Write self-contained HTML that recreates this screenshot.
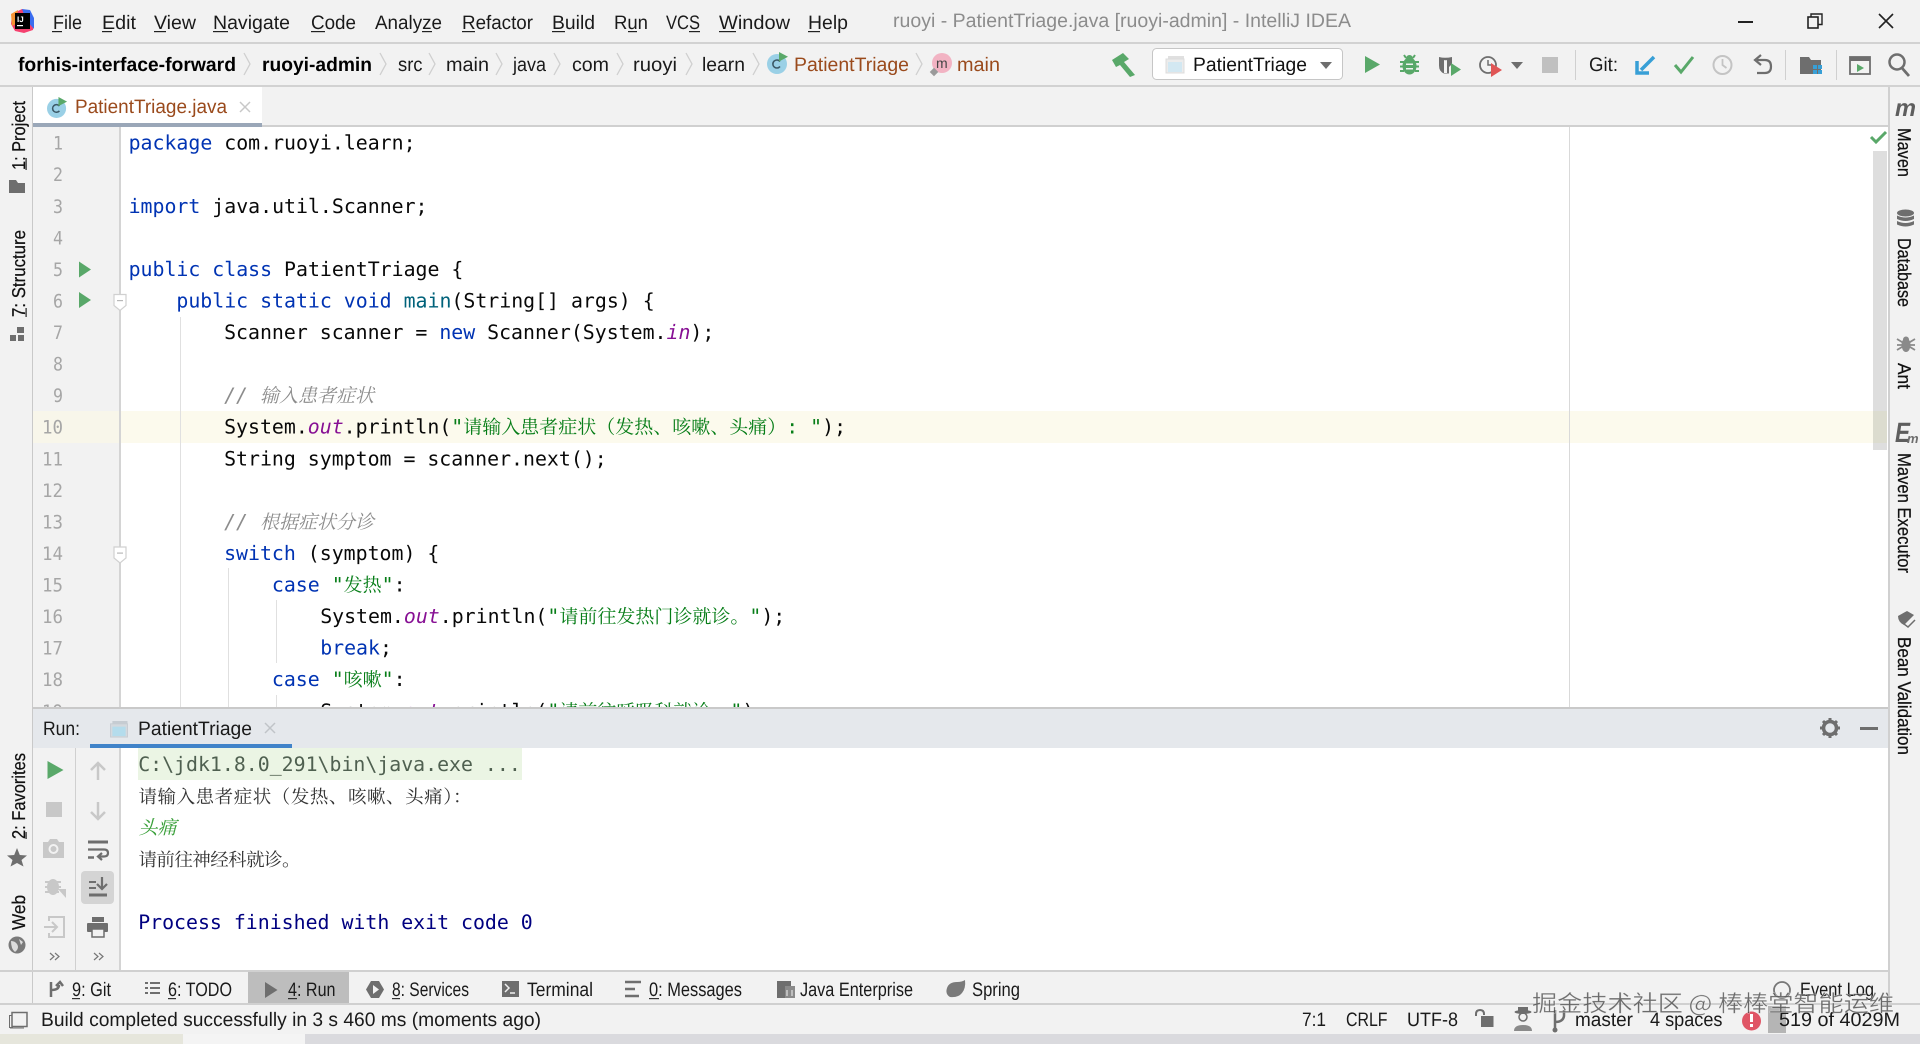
<!DOCTYPE html>
<html><head><meta charset="utf-8"><title>ruoyi - PatientTriage.java</title>
<style>
html,body{margin:0;padding:0;background:#f2f2f2;width:1920px;height:1044px;overflow:hidden}
svg{display:block;text-rendering:geometricPrecision}
.u{font-family:"Liberation Sans","Noto Sans CJK SC",sans-serif;font-size:19.5px;fill:#1a1a1a}
.b{font-weight:bold;fill:#000}
.v{font-family:"Liberation Sans",sans-serif;font-size:18.5px;fill:#111;stroke:#111;stroke-width:.25px}
.c{font-family:"DejaVu Sans Mono","Liberation Mono",monospace;font-size:19.88px;fill:#080808}
.k{fill:#0033b3}
.m{fill:#00627a}
.p{fill:#871094;font-style:italic}
.s{fill:#067d17}
.h{font-family:"Noto Serif CJK SC","Noto Sans CJK SC",serif;font-size:19px;font-weight:400}
.g{fill:#8c8c8c;font-style:italic}
.n{font-family:"DejaVu Sans Mono",monospace;font-size:18.5px;fill:#a6a6a6}
.w{font-family:"Noto Serif CJK SC",serif;font-size:18.5px;fill:#333;font-weight:400}
</style></head><body>
<svg width="1920" height="1044" viewBox="0 0 1920 1044" xmlns="http://www.w3.org/2000/svg">
<defs>
<clipPath id="ed"><rect x="33" y="127" width="1855" height="580"/></clipPath>
<symbol id="cls" viewBox="0 0 22 22"><circle cx="10" cy="12" r="10" fill="#9ad0e6"/><path d="M13 9.5a4 4 0 1 0 0 5" fill="none" stroke="#3c5866" stroke-width="1.6"/><polygon points="12,0 21,4.8 12,9.5" fill="#59a869"/></symbol>
<symbol id="win" viewBox="0 0 20 18"><rect x="3" y="0" width="16" height="4" fill="#e0e0e0"/><rect x="1" y="3" width="18" height="14" fill="#ececec" stroke="#dcdcdc"/><rect x="3" y="6" width="14" height="10" fill="#d3e8f2"/></symbol>
<symbol id="win2" viewBox="0 0 20 18"><rect x="3" y="0" width="16" height="4" fill="#c6ccd2"/><rect x="1" y="3" width="18" height="14" fill="#d4d9de" stroke="#c6ccd2"/><rect x="3" y="6" width="14" height="10" fill="#b4dcec"/></symbol>
</defs>

<!-- base chrome -->
<rect width="1920" height="1044" fill="#f2f2f2"/>
<rect y="42" width="1920" height="2" fill="#d2d2d2"/>
<rect y="85" width="1920" height="2" fill="#d2d2d2"/>

<!-- logo -->
<polygon points="12,14 22,9 30,12 34,20 33,30 24,33 15,31 11,24" fill="#f5416f"/>
<polygon points="22,9 30,10 34,18 34,29 26,20" fill="#3b6df0"/>
<polygon points="11,14 18,10 16,24 12,26" fill="#f79333"/>
<rect x="15" y="13" width="15" height="16" fill="#000"/>
<text x="17" y="22" font-family="Liberation Sans" font-size="8" font-weight="bold" fill="#fff">IJ</text>
<rect x="17" y="25" width="6" height="1.2" fill="#fff"/>

<!-- menu -->
<g class="u">
<text x="53" y="29" textLength="29" lengthAdjust="spacingAndGlyphs" class="u">File</text>
<text x="102" y="29" textLength="34" lengthAdjust="spacingAndGlyphs" class="u">Edit</text>
<text x="154" y="29" textLength="42" lengthAdjust="spacingAndGlyphs" class="u">View</text>
<text x="213" y="29" textLength="77" lengthAdjust="spacingAndGlyphs" class="u">Navigate</text>
<text x="311" y="29" textLength="45" lengthAdjust="spacingAndGlyphs" class="u">Code</text>
<text x="375" y="29" textLength="67" lengthAdjust="spacingAndGlyphs" class="u">Analyze</text>
<text x="462" y="29" textLength="71" lengthAdjust="spacingAndGlyphs" class="u">Refactor</text>
<text x="552" y="29" textLength="43" lengthAdjust="spacingAndGlyphs" class="u">Build</text>
<text x="614" y="29" textLength="34" lengthAdjust="spacingAndGlyphs" class="u">Run</text>
<text x="666" y="29" textLength="34" lengthAdjust="spacingAndGlyphs" class="u">VCS</text>
<text x="719" y="29" textLength="71" lengthAdjust="spacingAndGlyphs" class="u">Window</text>
<text x="808" y="29" textLength="40" lengthAdjust="spacingAndGlyphs" class="u">Help</text>
</g>
<g fill="#222">
<rect x="52" y="31" width="10" height="1.2"/><rect x="102" y="31" width="10" height="1.2"/><rect x="154" y="31" width="12" height="1.2"/><rect x="213" y="31" width="15" height="1.2"/><rect x="311" y="31" width="14" height="1.2"/><rect x="422" y="31" width="10" height="1.2"/><rect x="462" y="31" width="13" height="1.2"/><rect x="552" y="31" width="13" height="1.2"/><rect x="628" y="31" width="9" height="1.2"/><rect x="689" y="31" width="11" height="1.2"/><rect x="719" y="31" width="17" height="1.2"/><rect x="808" y="31" width="12" height="1.2"/>
</g>
<text x="893" y="27" textLength="458" lengthAdjust="spacingAndGlyphs" class="u" style="fill:#8c8c8c">ruoyi - PatientTriage.java [ruoyi-admin] - IntelliJ IDEA</text>

<!-- window controls -->
<rect x="1738" y="21" width="15" height="2" fill="#222"/>
<rect x="1808" y="17" width="10" height="11" fill="none" stroke="#222" stroke-width="1.6"/>
<path d="M1811 17v-3h11v10.500h-4" fill="none" stroke="#222" stroke-width="1.4"/>
<path d="M1879 14l14 14M1893 14l-14 14" stroke="#222" stroke-width="1.6"/>

<!-- breadcrumb -->
<text x="18" y="71" textLength="218" lengthAdjust="spacingAndGlyphs" class="u b">forhis-interface-forward</text>
<text x="262" y="71" textLength="110" lengthAdjust="spacingAndGlyphs" class="u b">ruoyi-admin</text>
<text x="398" y="71" textLength="24.500" lengthAdjust="spacingAndGlyphs" class="u">src</text>
<text x="446" y="71" textLength="43" lengthAdjust="spacingAndGlyphs" class="u">main</text>
<text x="513" y="71" textLength="33" lengthAdjust="spacingAndGlyphs" class="u">java</text>
<text x="572" y="71" textLength="37" lengthAdjust="spacingAndGlyphs" class="u">com</text>
<text x="633" y="71" textLength="44" lengthAdjust="spacingAndGlyphs" class="u">ruoyi</text>
<text x="702" y="71" textLength="43" lengthAdjust="spacingAndGlyphs" class="u">learn</text>
<text x="794" y="71" textLength="115" lengthAdjust="spacingAndGlyphs" class="u" style="fill:#9a4a1c">PatientTriage</text>
<text x="957" y="71" textLength="43" lengthAdjust="spacingAndGlyphs" class="u" style="fill:#9a4a1c">main</text>
<g fill="none" stroke="#cfcfcf" stroke-width="1.3">
<path d="M244 53l6 11-6 11"/><path d="M380 53l6 11-6 11"/><path d="M429 53l6 11-6 11"/><path d="M496 53l6 11-6 11"/><path d="M554 53l6 11-6 11"/><path d="M617 53l6 11-6 11"/><path d="M686 53l6 11-6 11"/><path d="M753 53l6 11-6 11"/><path d="M916 53l6 11-6 11"/>
</g>
<use href="#cls" x="767" y="52" width="22" height="22"/>
<circle cx="942" cy="63" r="10" fill="#f2b3c3"/>
<text x="936" y="68" font-family="Liberation Sans" font-size="14" fill="#444">m</text>
<rect x="931" y="69" width="6" height="6" transform="rotate(45 934 72)" fill="#9a9a9a"/>

<!-- toolbar -->
<path d="M1112 60l11-7 6 6-5 3 11 13-5 2-10-12-4 2z" fill="#59a869"/>
<rect x="1152.500" y="48.500" width="190" height="31" rx="4" fill="#fff" stroke="#c6c6c6"/>
<use href="#win" x="1165" y="56" width="20" height="18"/>
<text x="1193" y="71" textLength="114" lengthAdjust="spacingAndGlyphs" class="u" style="fill:#111">PatientTriage</text>
<polygon points="1320,62 1332,62 1326,69" fill="#6e6e6e"/>
<polygon points="1365,56 1380,64.500 1365,73" fill="#59a869"/>
<!-- debug -->
<g fill="#59a869"><ellipse cx="1409.500" cy="66" rx="7" ry="8.500"/><circle cx="1409.500" cy="58.500" r="3.500"/><rect x="1400" y="61" width="4" height="2"/><rect x="1415" y="61" width="4" height="2"/><rect x="1400" y="65.500" width="4" height="2"/><rect x="1415" y="65.500" width="4" height="2"/><rect x="1400" y="70" width="4" height="2"/><rect x="1415" y="70" width="4" height="2"/><path d="M1404 55l2 3M1415 55l-2 3" stroke="#59a869" stroke-width="2"/></g>
<rect x="1406" y="63.500" width="7" height="1.500" fill="#f2f2f2"/><rect x="1406" y="68" width="7" height="1.500" fill="#f2f2f2"/>
<!-- coverage -->
<path d="M1439 57q6 1.500 13 0v7l-3 3v6.500h-5q-5-2-5-8z" fill="#6e6e6e"/><path d="M1444 60q2 .5 3 0v13h-3z" fill="#f2f2f2"/><polygon points="1451,63 1461,69.500 1451,76" fill="#59a869"/>
<!-- profiler -->
<circle cx="1488" cy="65" r="8" fill="none" stroke="#6e6e6e" stroke-width="1.800"/><path d="M1488 60v5h4" fill="none" stroke="#6e6e6e" stroke-width="1.500"/><polygon points="1491,63 1502,70 1491,77" fill="#e05555"/>
<polygon points="1511,62 1523,62 1517,69" fill="#6e6e6e"/>
<rect x="1542" y="57" width="16" height="16" fill="#c0c0c0"/>
<rect x="1575" y="50" width="1" height="30" fill="#d0d0d0"/>
<text x="1589" y="71" textLength="29" lengthAdjust="spacingAndGlyphs" class="u">Git:</text>
<path d="M1654 57l-13 13" stroke="#389fd6" stroke-width="3.500" fill="none"/><path d="M1637 61v12h12" stroke="#389fd6" stroke-width="3.500" fill="none"/>
<path d="M1675 65l6 7 12-15" stroke="#59a869" stroke-width="3" fill="none"/>
<circle cx="1722.500" cy="65" r="9" fill="none" stroke="#c4c4c4" stroke-width="2"/><path d="M1722.500 59v6l4 3" stroke="#c4c4c4" stroke-width="1.800" fill="none"/>
<path d="M1757 60h8q6 0 6 6.500t-6 6.500h-8" fill="none" stroke="#6e6e6e" stroke-width="2.200"/><path d="M1761 55l-6 5 6 5" fill="none" stroke="#6e6e6e" stroke-width="2.200"/>
<rect x="1785" y="50" width="1" height="30" fill="#d0d0d0"/>
<path d="M1800 57h9l2 3h10v14h-21z" fill="#6e6e6e"/><g fill="#389fd6"><rect x="1813" y="65" width="4" height="4"/><rect x="1818" y="65" width="4" height="4"/><rect x="1813" y="70" width="4" height="4"/><rect x="1818" y="70" width="4" height="4"/></g>
<rect x="1836" y="50" width="1" height="30" fill="#d0d0d0"/>
<rect x="1850" y="57" width="20" height="17" fill="none" stroke="#6e6e6e" stroke-width="1.800"/><rect x="1850" y="57" width="20" height="4" fill="#6e6e6e"/><polygon points="1857,64 1864,68 1857,72" fill="#59a869"/>
<circle cx="1897" cy="62" r="7.500" fill="none" stroke="#6e6e6e" stroke-width="2.500"/><path d="M1902 68l7 8" stroke="#6e6e6e" stroke-width="2.800"/>

<!-- left strip -->
<rect x="32" y="87" width="1" height="918" fill="#c9c9c9"/>
<rect x="1888" y="87" width="2" height="918" fill="#d0d0d0"/>
<text transform="translate(25 170) rotate(-90)" textLength="69" lengthAdjust="spacingAndGlyphs" class="v">1: Project</text>
<rect x="25.500" y="158" width="1.200" height="12" fill="#222"/>
<path d="M9 180h7l2 3h7v10H9z" fill="#6e6e6e"/>
<text transform="translate(25 317) rotate(-90)" textLength="87" lengthAdjust="spacingAndGlyphs" class="v">7: Structure</text>
<rect x="25.500" y="308" width="1.200" height="9" fill="#222"/>
<g fill="#6e6e6e"><rect x="17" y="327" width="7" height="6"/><rect x="10" y="335" width="6" height="6"/><rect x="18" y="335" width="6" height="6"/></g>
<text transform="translate(25 839) rotate(-90)" textLength="86" lengthAdjust="spacingAndGlyphs" class="v">2: Favorites</text>
<rect x="25.500" y="832" width="1.200" height="7" fill="#222"/>
<polygon points="17,848 19.800,855 27,855.500 21.500,860 23.500,866.500 17,863 10.500,866.500 12.500,860 7,855.500 14.200,855" fill="#6e6e6e"/>
<text transform="translate(25 930) rotate(-90)" textLength="35" lengthAdjust="spacingAndGlyphs" class="v">Web</text>
<circle cx="17" cy="945" r="8.500" fill="#7a7a7a"/><path d="M11 941q4 0 6 3t0 6l-2 2q-4-3-4-11zM19 939l4 3-2 3z" fill="#dcdcdc"/>

<!-- right strip -->
<text x="1895" y="116" font-family="Liberation Sans" font-size="24" font-weight="bold" font-style="italic" fill="#5e5e5e" textLength="21" lengthAdjust="spacingAndGlyphs">m</text>
<text transform="translate(1898 128) rotate(90)" textLength="49" lengthAdjust="spacingAndGlyphs" class="v">Maven</text>
<g fill="#6e6e6e"><ellipse cx="1905.500" cy="213" rx="8.500" ry="3.500"/><path d="M1897 215.500q8.500 4 17 0v3.500q-8.500 4-17 0zM1897 221q8.500 4 17 0v3.500q-8.500 4-17 0z"/></g>
<text transform="translate(1898 238) rotate(90)" textLength="69" lengthAdjust="spacingAndGlyphs" class="v">Database</text>
<g fill="#8a8a8a"><ellipse cx="1906" cy="345" rx="4.500" ry="7"/><circle cx="1906" cy="339.500" r="3"/><path d="M1897 339l18 11M1915 339l-18 11M1897 345h18" stroke="#8a8a8a" stroke-width="1.800"/></g>
<text transform="translate(1898 363) rotate(90)" textLength="26" lengthAdjust="spacingAndGlyphs" class="v">Ant</text>
<text x="1895" y="442" font-family="Liberation Sans" font-size="28" font-weight="bold" font-style="italic" fill="#5e5e5e" textLength="15" lengthAdjust="spacingAndGlyphs">E</text>
<text x="1907" y="443" font-family="Liberation Sans" font-size="13" font-weight="bold" font-style="italic" fill="#6e6e6e">m</text>
<text transform="translate(1898 453) rotate(90)" textLength="120" lengthAdjust="spacingAndGlyphs" class="v">Maven Executor</text>
<path d="M1898 616l9-5 7 4-10 10q-6-3-6-9z" fill="#6e6e6e"/><path d="M1904 624l4 3 7-7" fill="none" stroke="#6e6e6e" stroke-width="1.500"/>
<text transform="translate(1898 637) rotate(90)" textLength="118" lengthAdjust="spacingAndGlyphs" class="v">Bean Validation</text>

<!-- tab row -->
<rect x="33" y="87" width="229" height="36" fill="#fff"/>
<rect x="33" y="125" width="1855" height="2" fill="#d0d0d0"/>
<rect x="33" y="123" width="229" height="4" fill="#9aa7b8"/>
<use href="#cls" x="47" y="97" width="21" height="21"/>
<text x="75" y="113" textLength="152" lengthAdjust="spacingAndGlyphs" class="u" style="fill:#9a4a1c">PatientTriage.java</text>
<path d="M240 102l10 10M250 102l-10 10" stroke="#c8c8c8" stroke-width="1.500"/>

<!-- editor -->
<rect x="33" y="127" width="1855" height="580" fill="#fff"/>
<rect x="33" y="127" width="86" height="580" fill="#f2f2f2"/>
<rect x="119" y="127" width="2" height="580" fill="#d4d4d4"/>
<rect x="33" y="411" width="86" height="32" fill="#f8f6ea"/>
<rect x="121" y="411" width="1752" height="32" fill="#fcfaed"/>
<rect x="1569" y="127" width="1" height="580" fill="#d9d9d9"/>
<rect x="180" y="317" width="1" height="390" fill="#e0e0e0"/>
<rect x="228" y="568" width="1" height="139" fill="#e0e0e0"/>
<rect x="276" y="600" width="1" height="63" fill="#e0e0e0"/>
<rect x="276" y="695" width="1" height="12" fill="#e0e0e0"/>
<rect x="1873" y="151" width="14" height="299" fill="#dedede"/>
<rect x="1873" y="411" width="14" height="32" fill="#dcdccf"/>
<path d="M1871 137l5 5 10-10" fill="none" stroke="#59a869" stroke-width="3"/>

<polygon points="79,261.500 91,269.500 79,277.500" fill="#59a869"/>
<polygon points="79,292 91,300 79,308" fill="#59a869"/>
<path d="M114 294.500h12v11l-6 5-6-5z" fill="#fff" stroke="#d0d0d0" stroke-width="1.200"/><rect x="117" y="300" width="6" height="1.200" fill="#b8b8b8"/>
<path d="M114 547h12v11l-6 5-6-5z" fill="#fff" stroke="#d0d0d0" stroke-width="1.200"/><rect x="117" y="552.500" width="6" height="1.200" fill="#b8b8b8"/>

<g clip-path="url(#ed)">
<g transform="translate(0 -0.800)">
<g class="n">
<text x="53" y="150.500" textLength="10" lengthAdjust="spacingAndGlyphs" class="n">1</text><text x="53" y="182" textLength="10" lengthAdjust="spacingAndGlyphs" class="n">2</text><text x="53" y="213.600" textLength="10" lengthAdjust="spacingAndGlyphs" class="n">3</text><text x="53" y="245.200" textLength="10" lengthAdjust="spacingAndGlyphs" class="n">4</text><text x="53" y="276.700" textLength="10" lengthAdjust="spacingAndGlyphs" class="n">5</text><text x="53" y="308.300" textLength="10" lengthAdjust="spacingAndGlyphs" class="n">6</text><text x="53" y="339.900" textLength="10" lengthAdjust="spacingAndGlyphs" class="n">7</text><text x="53" y="371.400" textLength="10" lengthAdjust="spacingAndGlyphs" class="n">8</text><text x="53" y="403" textLength="10" lengthAdjust="spacingAndGlyphs" class="n">9</text>
<text x="42" y="434.500" textLength="21" lengthAdjust="spacingAndGlyphs" class="n">10</text><text x="42" y="466.100" textLength="21" lengthAdjust="spacingAndGlyphs" class="n">11</text><text x="42" y="497.700" textLength="21" lengthAdjust="spacingAndGlyphs" class="n">12</text><text x="42" y="529.200" textLength="21" lengthAdjust="spacingAndGlyphs" class="n">13</text><text x="42" y="560.800" textLength="21" lengthAdjust="spacingAndGlyphs" class="n">14</text><text x="42" y="592.300" textLength="21" lengthAdjust="spacingAndGlyphs" class="n">15</text><text x="42" y="623.900" textLength="21" lengthAdjust="spacingAndGlyphs" class="n">16</text><text x="42" y="655.500" textLength="21" lengthAdjust="spacingAndGlyphs" class="n">17</text><text x="42" y="687" textLength="21" lengthAdjust="spacingAndGlyphs" class="n">18</text><text x="42" y="718.600" textLength="21" lengthAdjust="spacingAndGlyphs" class="n">19</text>
</g>
<text x="128.600" y="150.500" class="c"><tspan class="k">package</tspan> com.ruoyi.learn;</text>
<text x="128.600" y="213.600" class="c"><tspan class="k">import</tspan> java.util.Scanner;</text>
<text x="128.600" y="276.700" class="c"><tspan class="k">public class</tspan> PatientTriage {</text>
<text x="176.400" y="308.300" class="c"><tspan class="k">public static void</tspan> <tspan class="m">main</tspan>(String[] args) {</text>
<text x="224.100" y="339.900" class="c">Scanner scanner = <tspan class="k">new</tspan> Scanner(System.<tspan class="p">in</tspan>);</text>
<text x="224.100" y="403" class="c"><tspan class="g">// </tspan><tspan class="g h">输入患者症状</tspan></text>
<text x="224.100" y="434.500" class="c">System.<tspan class="p">out</tspan>.println(<tspan class="s">"</tspan><tspan class="s h">请输入患者症状（发热、咳嗽、头痛）</tspan><tspan class="s">: "</tspan>);</text>
<text x="224.100" y="466.100" class="c">String symptom = scanner.next();</text>
<text x="224.100" y="529.200" class="c"><tspan class="g">// </tspan><tspan class="g h">根据症状分诊</tspan></text>
<text x="224.100" y="560.800" class="c"><tspan class="k">switch</tspan> (symptom) {</text>
<text x="271.900" y="592.300" class="c"><tspan class="k">case</tspan> <tspan class="s">"</tspan><tspan class="s h">发热</tspan><tspan class="s">"</tspan>:</text>
<text x="320.200" y="623.900" class="c">System.<tspan class="p">out</tspan>.println(<tspan class="s">"</tspan><tspan class="s h">请前往发热门诊就诊。</tspan><tspan class="s">"</tspan>);</text>
<text x="320.200" y="655.500" class="c"><tspan class="k">break</tspan>;</text>
<text x="271.900" y="687" class="c"><tspan class="k">case</tspan> <tspan class="s">"</tspan><tspan class="s h">咳嗽</tspan><tspan class="s">"</tspan>:</text>
<text x="320.200" y="718.600" class="c">System.<tspan class="p">out</tspan>.println(<tspan class="s">"</tspan><tspan class="s h">请前往呼吸科就诊。</tspan><tspan class="s">"</tspan>);</text>
</g>
</g>

<!-- run header -->
<rect x="33" y="707" width="1855" height="2" fill="#c9c9c9"/>
<rect x="33" y="709" width="1855" height="39" fill="#e5e8ec"/>
<text x="43" y="735" textLength="37" lengthAdjust="spacingAndGlyphs" class="u">Run:</text>
<use href="#win2" x="109" y="721" width="20" height="17"/>
<text x="138" y="735" textLength="114" lengthAdjust="spacingAndGlyphs" class="u">PatientTriage</text>
<path d="M265 723l10 10M275 723l-10 10" stroke="#c0c4c8" stroke-width="1.500"/>
<rect x="90" y="744" width="202" height="4" fill="#4083c9"/>
<g fill="#6e6e6e"><circle cx="1830" cy="728" r="6.500" fill="none" stroke="#6e6e6e" stroke-width="3.500"/><g stroke="#6e6e6e" stroke-width="3"><path d="M1830 718v4M1830 734v4M1820 728h4M1836 728h4M1823 721l3 3M1834 732l3 3M1837 721l-3 3M1826 732l-3 3"/></g></g>
<rect x="1860" y="727" width="18" height="3" fill="#6e6e6e"/>

<!-- run side -->
<rect x="33" y="748" width="86" height="222" fill="#f2f2f2"/>
<rect x="75" y="748" width="1" height="222" fill="#d0d0d0"/>
<rect x="119" y="748" width="2" height="222" fill="#d4d4d4"/>
<rect x="121" y="748" width="1767" height="222" fill="#fff"/>
<polygon points="47.500,761 63.500,770 47.500,779" fill="#59a869"/>
<rect x="46" y="802" width="16" height="15" fill="#c8c8c8"/>
<path d="M43 842h5l2-3h7l2 3h5v16H43z" fill="#c8c8c8"/><circle cx="53.500" cy="849" r="4" fill="none" stroke="#f2f2f2" stroke-width="2"/>
<g fill="#c8c8c8"><ellipse cx="53" cy="887" rx="6" ry="8"/><rect x="45" y="881" width="16" height="2"/><rect x="45" y="886" width="16" height="2"/><rect x="45" y="891" width="14" height="2"/></g>
<polygon points="58,889 66,889 66,898" fill="#c8c8c8"/>
<path d="M49 921v-4h15v20H49v-4" fill="none" stroke="#c8c8c8" stroke-width="2"/><path d="M44 927h12M52 922l5 5-5 5" fill="none" stroke="#c8c8c8" stroke-width="2"/>
<path d="M50 953l4 3.500-4 3.500M55 953l4 3.500-4 3.500" fill="none" stroke="#777" stroke-width="1.200"/>
<path d="M98 780v-17M91 770l7-7 7 7" fill="none" stroke="#c8c8c8" stroke-width="2.500"/>
<path d="M98 802v17M91 812l7 7 7-7" fill="none" stroke="#c8c8c8" stroke-width="2.500"/>
<path d="M88 842h20" fill="none" stroke="#6e6e6e" stroke-width="3"/><path d="M88 849.500h16q4 0 4 3.500t-4 3.500h-5M102 853l-4 3.500 4 3.500" fill="none" stroke="#6e6e6e" stroke-width="2.200"/><path d="M88 857.500h6" stroke="#6e6e6e" stroke-width="2.500"/>
<rect x="81" y="871" width="33" height="33" rx="4" fill="#d4d4d4"/>
<path d="M89 882h7M89 888h7" fill="none" stroke="#6e6e6e" stroke-width="2"/><path d="M89 895h18" stroke="#6e6e6e" stroke-width="3"/><path d="M102 877v12M97 884l5 5 5-5" fill="none" stroke="#6e6e6e" stroke-width="2.200"/>
<rect x="92" y="917" width="12" height="5" fill="#6e6e6e"/><rect x="87" y="923" width="21" height="9" rx="1" fill="#6e6e6e"/><rect x="92" y="929" width="12" height="8" fill="#f2f2f2" stroke="#6e6e6e" stroke-width="1.500"/>
<path d="M94 953l4 3.500-4 3.500M99 953l4 3.500-4 3.500" fill="none" stroke="#777" stroke-width="1.200"/>

<!-- console -->
<rect x="138" y="748" width="384" height="32" fill="#ebf5e4"/>
<text x="138.200" y="771" class="c" style="fill:#4f6050">C:\jdk1.8.0_291\bin\java.exe ...</text>
<text x="138.500" y="803" textLength="333" lengthAdjust="spacing" class="w">请输入患者症状（发热、咳嗽、头痛）：</text>
<text x="138.500" y="834" class="w" style="fill:#3aa03a;font-style:italic;font-size:19px">头痛</text>
<text x="138.500" y="866" textLength="162" lengthAdjust="spacing" class="w">请前往神经科就诊。</text>
<text x="138.200" y="929" class="c" style="fill:#000080">Process finished with exit code 0</text>

<!-- bottom tool bar -->
<rect y="970" width="1890" height="2" fill="#d0d0d0"/>
<rect y="1003" width="1920" height="2" fill="#d0d0d0"/>
<rect x="248" y="972" width="101" height="31" fill="#bdbdbd"/>
<g>
<text x="72" y="996" textLength="39" lengthAdjust="spacingAndGlyphs" class="u">9: Git</text>
<text x="168" y="996" textLength="64" lengthAdjust="spacingAndGlyphs" class="u">6: TODO</text>
<text x="288" y="996" textLength="47.500" lengthAdjust="spacingAndGlyphs" class="u">4: Run</text>
<text x="392" y="996" textLength="77" lengthAdjust="spacingAndGlyphs" class="u">8: Services</text>
<text x="527" y="996" textLength="66" lengthAdjust="spacingAndGlyphs" class="u">Terminal</text>
<text x="649" y="996" textLength="93" lengthAdjust="spacingAndGlyphs" class="u">0: Messages</text>
<text x="800" y="996" textLength="113" lengthAdjust="spacingAndGlyphs" class="u">Java Enterprise</text>
<text x="972" y="996" textLength="48" lengthAdjust="spacingAndGlyphs" class="u">Spring</text>
<text x="1800" y="996" textLength="74" lengthAdjust="spacingAndGlyphs" class="u">Event Log</text>
</g>
<g fill="#333"><rect x="72" y="998" width="8" height="1.200"/><rect x="168" y="998" width="8" height="1.200"/><rect x="288" y="998" width="9" height="1.200"/><rect x="392" y="998" width="8" height="1.200"/><rect x="649" y="998" width="10" height="1.200"/></g>
<path d="M51 982v15M51 990q8 0 8-5M56 986l4-4 3 4" fill="none" stroke="#6e6e6e" stroke-width="2.500"/>
<path d="M145 983h3M150 983h10M145 988h3M150 988h10M145 993h3M150 993h10" stroke="#6e6e6e" stroke-width="2"/>
<polygon points="265,982 277.500,990 265,998" fill="#6e6e6e"/>
<path d="M371 981h8l5 8.500-5 8.500h-8l-5-8.500z" fill="#6e6e6e"/><polygon points="373,985 379,989.500 373,994" fill="#f2f2f2"/>
<rect x="502" y="981" width="17" height="16" fill="#6e6e6e"/><path d="M505 984l4 4-4 4M510 993h5" fill="none" stroke="#f2f2f2" stroke-width="1.500"/>
<path d="M625 982h16M625 989h10M625 996h14" stroke="#6e6e6e" stroke-width="2.500"/>
<path d="M777 981h14v5h-6v12h-8z" fill="#6e6e6e"/><rect x="785" y="986" width="10" height="12" fill="#8a8a8a"/><path d="M787 990v6M792 990v6" stroke="#f2f2f2" stroke-width="1"/>
<path d="M965 980q1 8-3 13t-12 4q-5-3-3-9t10-6q5 0 8-2z" fill="#7a7a7a"/>
<circle cx="1782" cy="990" r="8" fill="none" stroke="#777" stroke-width="1.800"/>

<!-- status bar -->
<rect x="9.500" y="1015.500" width="3" height="12" fill="none" stroke="#6e6e6e" stroke-width="1"/>
<rect x="12" y="1012.500" width="15" height="14" fill="#f2f2f2" stroke="#6e6e6e" stroke-width="1.500"/>
<path d="M10 1028h14" stroke="#6e6e6e"/>
<text x="41" y="1026" textLength="500" lengthAdjust="spacingAndGlyphs" class="u">Build completed successfully in 3 s 460 ms (moments ago)</text>
<text x="1302" y="1026" textLength="24" lengthAdjust="spacingAndGlyphs" class="u">7:1</text>
<text x="1346" y="1026" textLength="41.500" lengthAdjust="spacingAndGlyphs" class="u">CRLF</text>
<text x="1407" y="1026" textLength="51" lengthAdjust="spacingAndGlyphs" class="u">UTF-8</text>
<path d="M1476 1016v-2q0-4 4-4t4 4v1" fill="none" stroke="#6e6e6e" stroke-width="2"/><rect x="1481" y="1016" width="12.500" height="11" fill="#6e6e6e"/>
<ellipse cx="1523" cy="1012" rx="8.500" ry="2" fill="#6e6e6e"/><rect x="1518" y="1007" width="10" height="5" fill="#6e6e6e"/><circle cx="1523" cy="1017" r="4" fill="none" stroke="#6e6e6e" stroke-width="1.500"/><path d="M1514 1031q0-6 9-6t9 6z" fill="#8a8a8a"/>
<path d="M1555 1010v22M1555 1022q8 0 9-6v-6" fill="none" stroke="#6e6e6e" stroke-width="2.500"/><circle cx="1555" cy="1030" r="2.500" fill="#6e6e6e"/>
<text x="1575" y="1026" textLength="58" lengthAdjust="spacingAndGlyphs" class="u">master</text>
<text x="1650" y="1026" textLength="72.500" lengthAdjust="spacingAndGlyphs" class="u">4 spaces</text>
<circle cx="1751.500" cy="1021" r="9.500" fill="#e05565"/><rect x="1750" y="1014" width="3" height="8" fill="#fff"/><rect x="1750" y="1024" width="3" height="3" fill="#fff"/>
<rect x="1768" y="1006" width="18" height="27" fill="#b5b5b5"/>
<text x="1779" y="1026" textLength="121" lengthAdjust="spacingAndGlyphs" class="u">519 of 4029M</text>

<!-- desktop strip -->
<rect y="1034" width="183" height="10" fill="#e6e6dc"/>
<rect x="183" y="1034" width="122" height="10" fill="#f4f4f4"/>
<rect x="305" y="1034" width="1615" height="10" fill="#dadade"/>

<!-- watermark -->
<text x="1532" y="1011.500" textLength="362" lengthAdjust="spacingAndGlyphs" font-family="Noto Sans CJK SC,sans-serif" font-size="23" fill="rgba(70,70,70,.8)" stroke="rgba(255,255,255,.5)" stroke-width=".6">掘金技术社区 @ 棒棒堂智能运维</text>
</svg>
</body></html>
